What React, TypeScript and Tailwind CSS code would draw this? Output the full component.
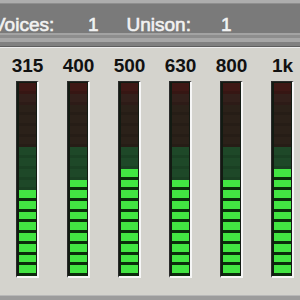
import React from "react";

const labels = ["315", "400", "500", "630", "800", "1k"];
const lit = [8, 9, 10, 9, 9, 10];

function segClass(i: number, n: number): string {
  if (i < n) return "bg-[#42e542] border-b-[3px] border-[#0b2d0b]";
  if (i < 12) return "bg-[#1e4828] border-b-[3px] border-[#1a4023]";
  if (i < 16) return "bg-[#2b2119] border-b-[3px] border-[#261d16]";
  if (i < 17) return "bg-[#33201b] border-b-[3px] border-[#2d1b17]";
  return "bg-[#3e1815] border-b-[3px] border-[#361613]";
}

function Meter({ n }: { n: number }) {
  const segs = Array.from({ length: 18 }, (_, i) => i);
  return (
    <div className="w-[23px] h-[197px] border-l border-t border-[#2a2a2a] border-r-2 border-b-2 border-r-[#f6f6f6] border-b-[#f6f6f6] bg-[#121a12] pl-[2px] pr-[1px] pt-[1px] flex">
      <div className="flex flex-col-reverse flex-1">
        {segs.map((i) => (
          <div key={i} className={"flex-1 " + segClass(i, n)} />
        ))}
      </div>
    </div>
  );
}

export default function App() {
  return (
    <div className="w-[300px] h-[300px] overflow-hidden flex flex-col bg-[#d4d3cd]" style={{ fontFamily: '"Liberation Sans", Arial, sans-serif' }}>
      <div className="h-[3px] bg-[#adadad]" />
      <div className="h-[1px] bg-[#8e8e8e]" />
      <div className="h-[29px] bg-[#7a7a7a] flex pt-[11px] text-[19px] leading-[19px] text-[#f2f2f2] whitespace-nowrap [-webkit-text-stroke:0.6px_#f2f2f2]">
        <div className="ml-[-7px] w-[95px] shrink-0">Voices:</div>
        <div className="w-[38.5px] shrink-0">1</div>
        <div className="w-[94.5px] shrink-0">Unison:</div>
        <div className="shrink-0">1</div>
      </div>
      <div className="h-[2px] bg-[#a3a3a3]" />
      <div className="h-[3px] bg-[#8d8d8d]" />
      <div className="h-[4px] bg-[#a6a6a6]" />
      <div className="h-[4px] bg-[#808080]" />
      <div className="h-[1px] bg-[#5e5e5e]" />
      <div className="h-[1px] bg-[#ececec]" />
      <div className="flex-1 flex pl-[16px] gap-[28px] pt-[8px]">
        {labels.map((l, k) => (
          <div key={l} className="w-[23px] flex flex-col items-center shrink-0">
            <div className="h-[19px] text-[19px] leading-[19px] font-bold text-[#111] whitespace-nowrap">{l}</div>
            <div className="mt-[6px]">
              <Meter n={lit[k]} />
            </div>
          </div>
        ))}
      </div>
      <div className="h-[1px] bg-[#b8b8b8]" />
      <div className="h-[4px] bg-[#9c9c9c]" />
    </div>
  );
}
